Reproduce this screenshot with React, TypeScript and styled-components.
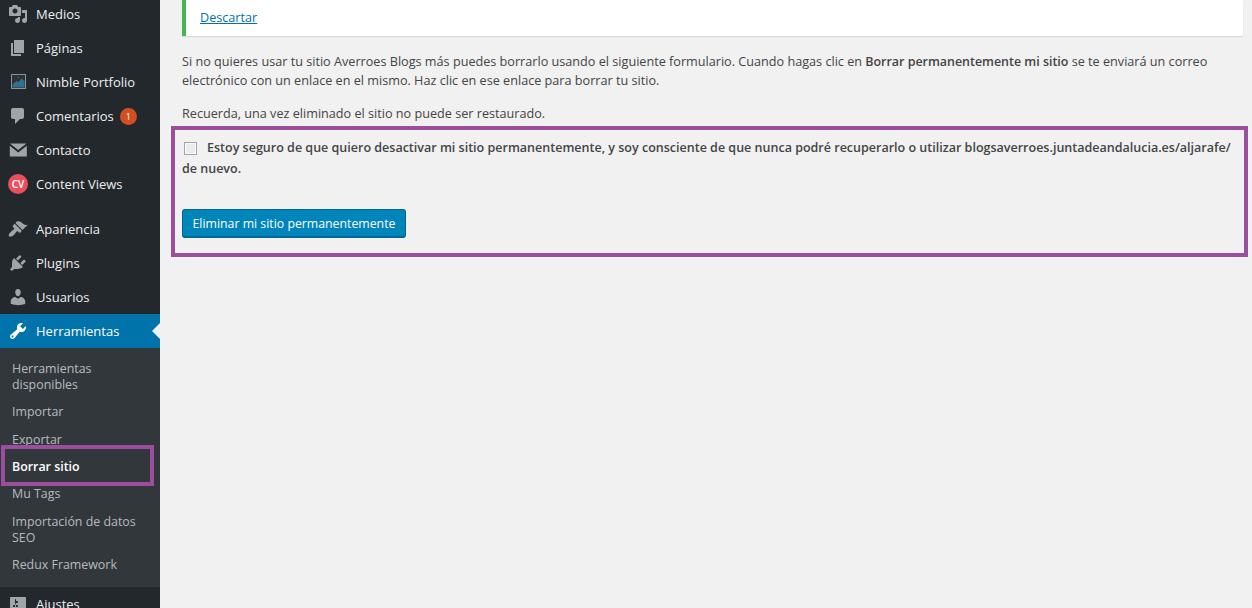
import React from "react";
import styled, { createGlobalStyle } from "styled-components";

const GlobalStyle = createGlobalStyle`
  html, body {
    margin: 0;
    padding: 0;
    background: #f1f1f1;
    font-family: "Open Sans", "Liberation Sans", sans-serif;
    font-size: 13px;
    overflow: hidden;
  }
`;

const Page = styled.div`
  position: relative;
  display: flex;
  width: 1252px;
  height: 608px;
  overflow: hidden;
  background: #f1f1f1;
`;

const Sidebar = styled.nav`
  width: 160px;
  height: 608px;
  flex: none;
  background: #23282d;
  overflow: hidden;
`;

const MenuList = styled.div`
  margin-top: -3px;
`;

const MenuRow = styled.div<{ $active?: boolean }>`
  position: relative;
  display: flex;
  align-items: center;
  height: 34px;
  padding-left: 8px;
  color: ${(p) => (p.$active ? "#fff" : "#eee")};
  background: ${(p) => (p.$active ? "#0073aa" : "transparent")};
  ${(p) =>
    p.$active &&
    `&::after {
      content: "";
      position: absolute;
      right: 0;
      top: 50%;
      margin-top: -8px;
      border: 8px solid transparent;
      border-right-color: #f1f1f1;
      border-left-width: 0;
    }`}
`;

const IconSlot = styled.span<{ $active?: boolean }>`
  width: 28px;
  height: 20px;
  flex: none;
  color: ${(p) => (p.$active ? "#fff" : "#a0a5aa")};
  svg {
    display: block;
    width: 20px;
    height: 20px;
    fill: currentColor;
  }
`;

const Separator = styled.div`
  height: 11px;
`;

const CountBadge = styled.span`
  display: inline-block;
  width: 17px;
  height: 17px;
  margin-left: 6px;
  border-radius: 50%;
  background: #d54e21;
  color: #fff;
  font-size: 9px;
  line-height: 17px;
  text-align: center;
`;

const CvLogo = styled.span`
  display: block;
  width: 20px;
  height: 20px;
  border-radius: 50%;
  background: #ec4f5c;
  color: #fff;
  font-size: 10px;
  font-weight: 600;
  line-height: 20px;
  text-align: center;
`;

const SubMenu = styled.div`
  padding: 7.2px 0 7.8px;
  background: #32373c;
`;

const SubItem = styled.div<{ $current?: boolean }>`
  padding: 5.7px 12px;
  line-height: 16px;
  font-size: 12.4px;
  font-weight: ${(p) => (p.$current ? 600 : 400)};
  color: ${(p) => (p.$current ? "#fff" : "rgba(240, 245, 250, 0.7)")};
`;

const Main = styled.main`
  flex: 1;
  min-width: 0;
  padding-right: 9px;
  padding-left: 22px;
  color: #444;
  font-size: 12.65px;
`;

const Notice = styled.div`
  height: 36px;
  box-sizing: border-box;
  padding-top: 8px;
  padding-left: 14px;
  background: #fff;
  border-left: 4px solid #46b450;
  box-shadow: 0 1px 1px rgba(0, 0, 0, 0.1);
  line-height: 19px;
`;

const DismissLink = styled.a`
  color: #0073aa;
  text-decoration: underline;
`;

const Paragraph = styled.p`
  margin: 0 0 14px;
  line-height: 19px;
  &:first-of-type {
    margin-top: 16px;
  }
  strong {
    font-size: 12.45px;
    font-weight: 600;
  }
`;

const ConfirmLabel = styled.label`
  display: block;
  margin-top: 14px;
  font-size: 12.52px;
  font-weight: 600;
  line-height: 21px;
  color: #444;
`;

const CheckBox = styled.span`
  display: inline-block;
  box-sizing: border-box;
  width: 13px;
  height: 13px;
  margin: 0 10px 0 2px;
  vertical-align: -3px;
  background: #ebebeb;
  border: 1px solid #a3a3a3;
  box-shadow: inset 0 0 0 1px #fff;
`;

const DangerButton = styled.button`
  display: block;
  width: 224px;
  height: 29px;
  margin-top: 30px;
  padding: 1px 0 0;
  background: #0085ba;
  border: 1px solid #006799;
  border-bottom-width: 2px;
  border-radius: 3px;
  color: #fff;
  font-family: inherit;
  font-size: 12.3px;
  line-height: 26px;
  text-align: center;
`;

const Highlight = styled.div<{ $left: number; $top: number; $width: number; $height: number }>`
  position: absolute;
  left: ${(p) => p.$left}px;
  top: ${(p) => p.$top}px;
  width: ${(p) => p.$width}px;
  height: ${(p) => p.$height}px;
  box-sizing: border-box;
  border: 4px solid #9b4d9e;
  pointer-events: none;
`;

const Icon = ({ d, active }: { d: string; active?: boolean }) => (
  <IconSlot $active={active}>
    <svg viewBox="0 0 20 20">
      <path d={d} fillRule="evenodd" />
    </svg>
  </IconSlot>
);

const PortfolioIcon = () => (
  <IconSlot>
    <svg viewBox="0 0 20 20">
      <rect x="3.5" y="2.5" width="14" height="14" fill="#2b3238" stroke="#8c9196" strokeWidth="1" />
      <path d="M4.5 12.5l4-3.5 2 1 3-3.5 3 2.5v6.5h-12z" fill="#33708f" />
      <path d="M10 4.5l.6 1.2h-1.2z" fill="#8c9196" />
    </svg>
  </IconSlot>
);

const icons = {
  media:
    "M13 11V4c0-.55-.45-1-1-1h-1.67L9 1H5L3.67 3H2c-.55 0-1 .45-1 1v7c0 .55.45 1 1 1h10c.55 0 1-.45 1-1zM7 4.5c1.38 0 2.5 1.12 2.5 2.5S8.38 9.5 7 9.5 4.5 8.38 4.5 7 5.62 4.5 7 4.5zM14 6h5v10.5c0 1.38-1.12 2.5-2.5 2.5S14 17.88 14 16.5s1.12-2.5 2.5-2.5c.17 0 .34.02.5.05V9h-3V6zm-4 8.05V13h2v3.5c0 1.38-1.12 2.5-2.5 2.5S7 17.88 7 16.5 8.12 14 9.5 14c.17 0 .34.02.5.05z",
  page: "M6 15V2h10v13H6zm-1 1h8v2H3V5h2v11z",
  comments:
    "M5 2h9c1.1 0 2 .9 2 2v7c0 1.1-.9 2-2 2h-2l-5 5v-5H5c-1.1 0-2-.9-2-2V4c0-1.1.9-2 2-2z",
  mail: "M2 3.5h16.5L10.2 10 2 3.5zM1.8 5.8v10.7h17V5.8l-8.6 6.8-8.4-6.8z",
  appearance:
    "M14.48 11.06L7.41 3.99l1.5-1.5c.5-.56 2.3-.47 3.51.32 1.21.8 1.43 1.28 2.91 2.1 1.18.64 2.45 1.26 4.45.85zm-.71.71L6.7 4.7 4.93 6.47c-.39.39-.39 1.02 0 1.41l1.06 1.06c.39.39.39 1.03 0 1.42-.6.6-1.43 1.11-2.21 1.69-.35.26-.7.53-1.01.84C1.43 13.78 0 16.18 1.17 17.35c1.17 1.17 3.56-.25 4.92-1.61.31-.31.58-.66.85-1.02.57-.78 1.08-1.61 1.69-2.21.39-.39 1.02-.39 1.41 0l1.06 1.06c.39.39 1.02.39 1.41 0z",
  plugins:
    "M13.11 4.36L9.87 7.6 8 5.73l3.24-3.24c.35-.34 1.05-.2 1.56.32.52.51.66 1.21.31 1.55zm-8 1.77l.91-1.12 9.01 9.01-1.19.84c-.71.71-2.63 1.16-3.82 1.16H6.14L4.9 17.26c-.59.59-1.54.59-2.12 0-.59-.58-.59-1.53 0-2.12l1.24-1.24v-3.88c0-1.13.4-3.19 1.09-3.89zm7.26 3.97l3.24-3.24c.34-.35 1.04-.21 1.55.31.52.51.66 1.21.31 1.55l-3.24 3.25z",
  users:
    "M10 9.25c-2.27 0-2.73-3.44-2.73-3.44C7 4.02 7.82 2 9.97 2c2.16 0 2.98 2.02 2.71 3.81 0 0-.41 3.44-2.68 3.44zm0 2.57L12.72 10c2.39 0 4.52 2.33 4.52 4.53v2.49s-3.65 1.13-7.24 1.13c-3.65 0-7.24-1.13-7.24-1.13v-2.49c0-2.25 1.94-4.48 4.47-4.48z",
  tools:
    "M16.68 9.77c-1.34 1.34-3.3 1.67-4.95.99l-5.41 6.52c-.99.99-2.59.99-3.58 0s-.99-2.59 0-3.57l6.52-5.42c-.68-1.65-.35-3.61.99-4.95 1.28-1.28 3.12-1.62 4.72-1.06l-2.89 2.89 2.82 2.82 2.86-2.87c.53 1.58.18 3.39-1.08 4.65zM3.81 16.21c.4.39 1.04.39 1.43 0 .4-.4.4-1.04 0-1.43-.39-.4-1.03-.4-1.43 0-.39.39-.39 1.03 0 1.43z",
  settings:
    "M18 16V4c0-.55-.45-1-1-1H3c-.55 0-1 .45-1 1v12c0 .55.45 1 1 1h14c.55 0 1-.45 1-1zM8 11h1c.55 0 1 .45 1 1s-.45 1-1 1H8v1.5c0 .28-.22.5-.5.5s-.5-.22-.5-.5V13H6c-.55 0-1-.45-1-1s.45-1 1-1h1V5.5c0-.28.22-.5.5-.5s.5.22.5.5V7h1c.55 0 1 .45 1 1s-.45 1-1 1h-1v5.5c0 .28-.22.5-.5.5s-.5-.22-.5-.5V9z",
};

const subItems = [
  "Herramientas disponibles",
  "Importar",
  "Exportar",
  "Borrar sitio",
  "Mu Tags",
  "Importación de datos SEO",
  "Redux Framework",
];

export default function App() {
  return (
    <Page>
      <GlobalStyle />
      <Sidebar>
        <MenuList>
          <MenuRow><Icon d={icons.media} />Medios</MenuRow>
          <MenuRow><Icon d={icons.page} />Páginas</MenuRow>
          <MenuRow><PortfolioIcon />Nimble Portfolio</MenuRow>
          <MenuRow>
            <Icon d={icons.comments} />
            Comentarios
            <CountBadge>1</CountBadge>
          </MenuRow>
          <MenuRow><Icon d={icons.mail} />Contacto</MenuRow>
          <MenuRow>
            <IconSlot><CvLogo>CV</CvLogo></IconSlot>
            Content Views
          </MenuRow>
          <Separator />
          <MenuRow><Icon d={icons.appearance} />Apariencia</MenuRow>
          <MenuRow><Icon d={icons.plugins} />Plugins</MenuRow>
          <MenuRow><Icon d={icons.users} />Usuarios</MenuRow>
          <MenuRow $active><Icon d={icons.tools} active />Herramientas</MenuRow>
          <SubMenu>
            {subItems.map((item) => (
              <SubItem key={item} $current={item === "Borrar sitio"}>{item}</SubItem>
            ))}
          </SubMenu>
          <MenuRow><Icon d={icons.settings} />Ajustes</MenuRow>
        </MenuList>
      </Sidebar>
      <Main>
        <Notice>
          <DismissLink href="#">Descartar</DismissLink>
        </Notice>
        <Paragraph>
          Si no quieres usar tu sitio Averroes Blogs más puedes borrarlo usando el siguiente formulario. Cuando hagas
          clic en <strong>Borrar permanentemente mi sitio</strong> se te enviará un correo electrónico con un enlace en
          el mismo. Haz clic en ese enlace para borrar tu sitio.
        </Paragraph>
        <Paragraph>Recuerda, una vez eliminado el sitio no puede ser restaurado.</Paragraph>
        <ConfirmLabel>
          <CheckBox />
          Estoy seguro de que quiero desactivar mi sitio permanentemente, y soy consciente de que nunca podré
          recuperarlo o utilizar blogsaverroes.juntadeandalucia.es/aljarafe/ de nuevo.
        </ConfirmLabel>
        <DangerButton type="button">Eliminar mi sitio permanentemente</DangerButton>
      </Main>
      <Highlight $left={171} $top={126} $width={1077} $height={131} />
      <Highlight $left={1} $top={445} $width={153} $height={41} />
    </Page>
  );
}
